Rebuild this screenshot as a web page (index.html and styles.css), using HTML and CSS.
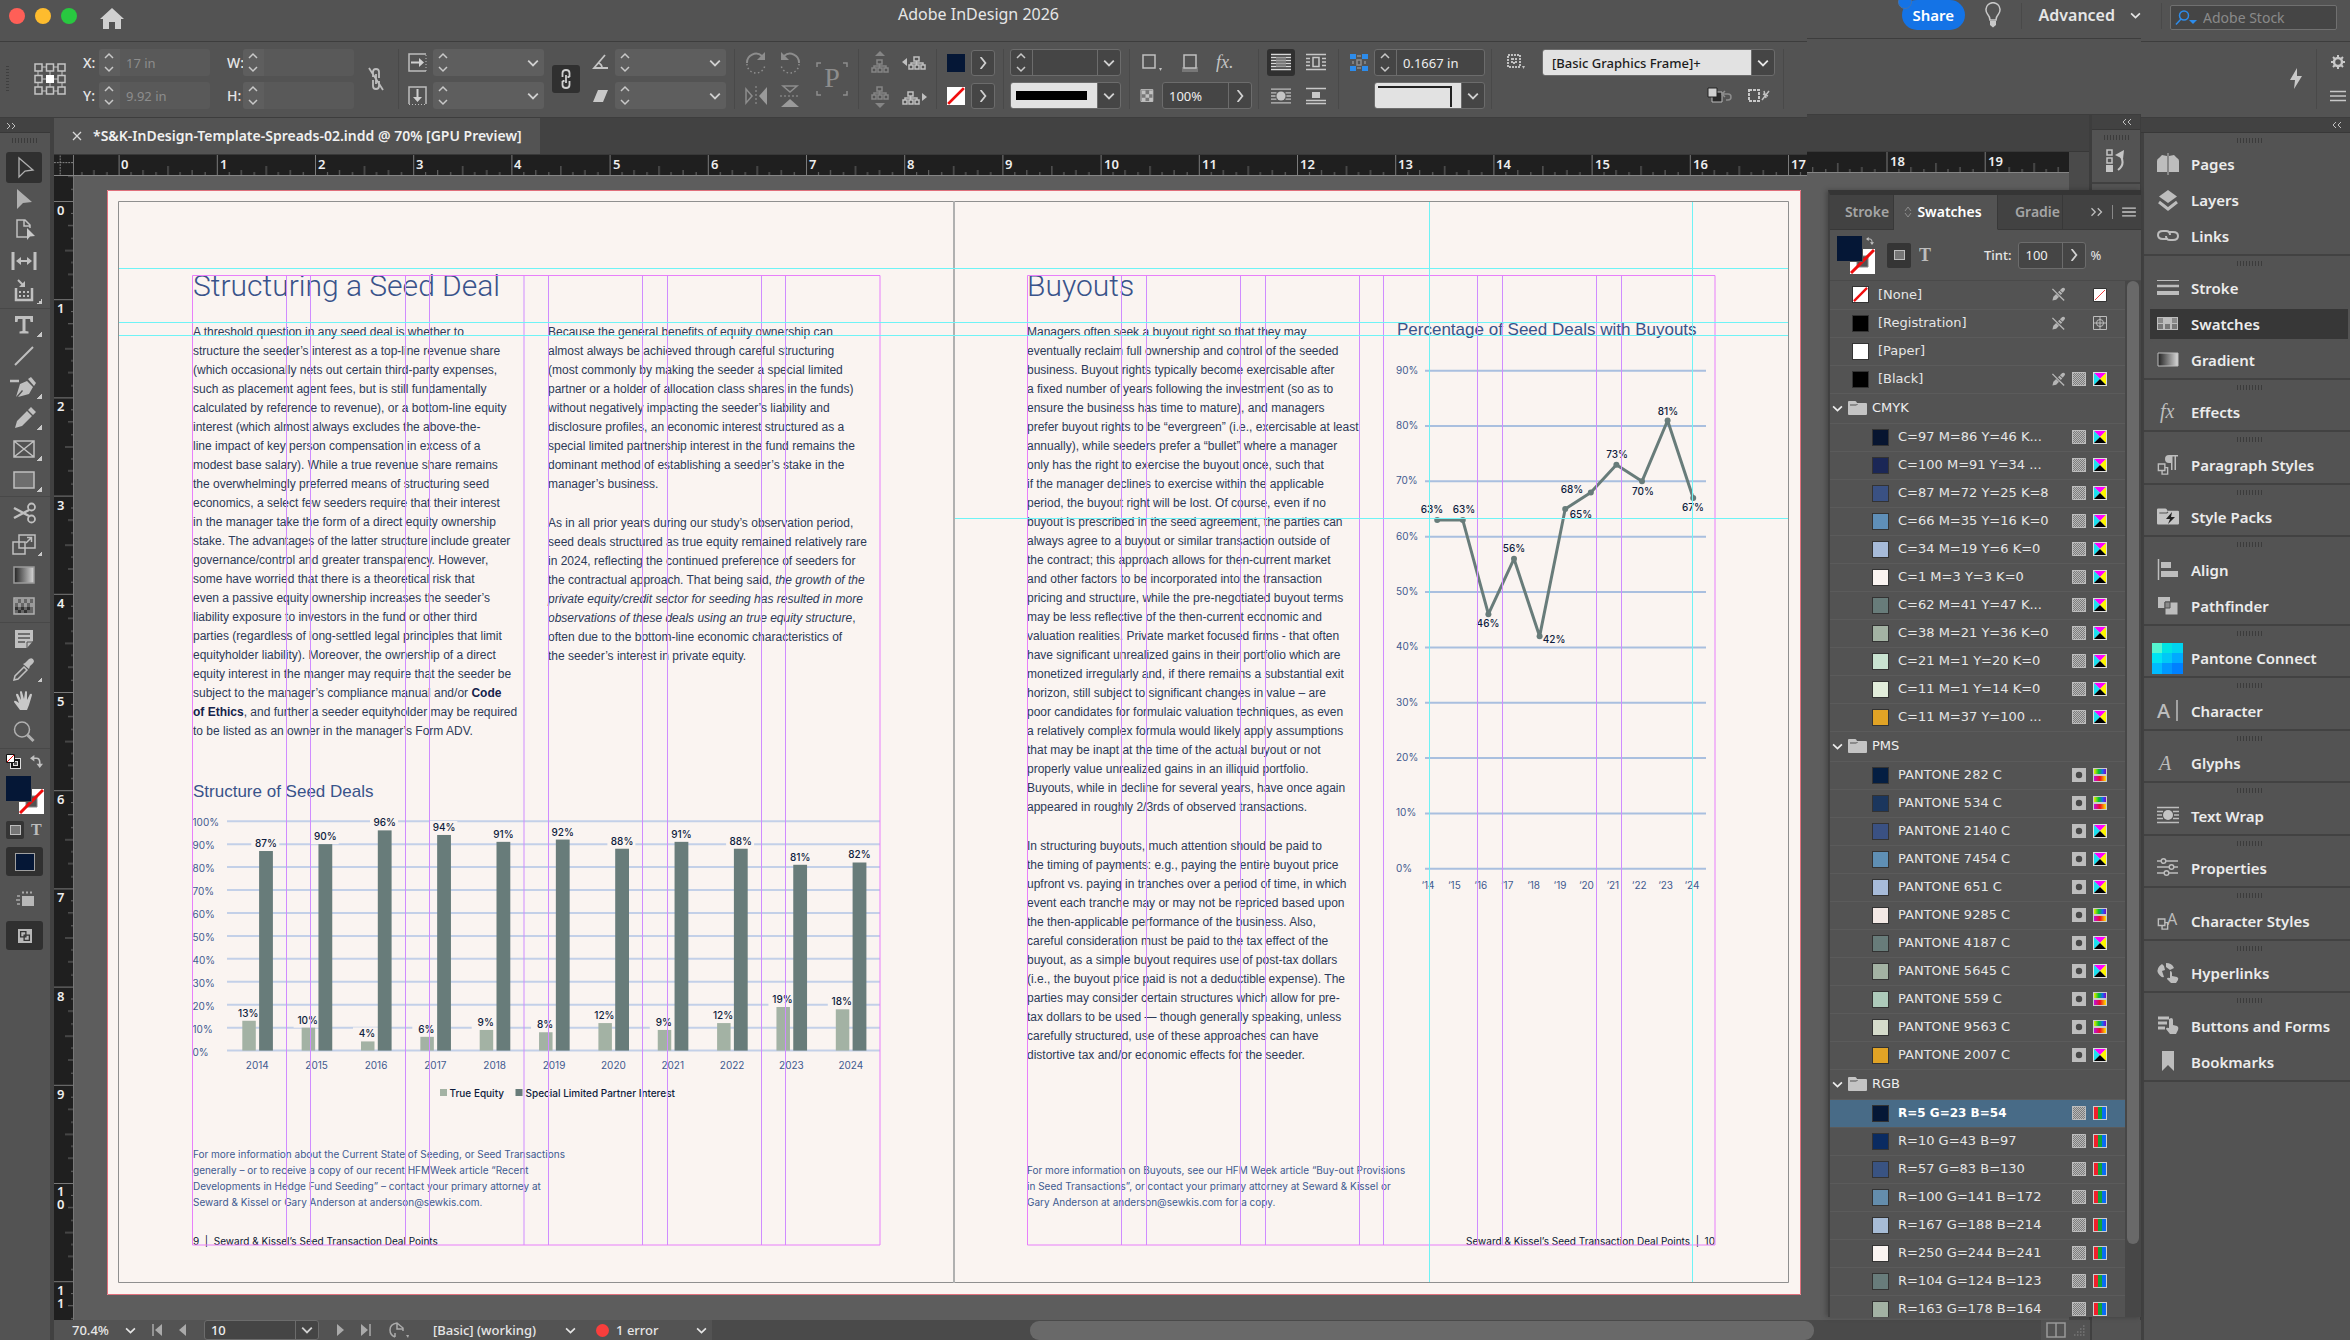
FILE: index.html
```html
<!DOCTYPE html>
<html lang="en">
<head>
<meta charset="utf-8">
<title>Adobe InDesign 2026</title>
<link rel="stylesheet" href="styles.css">
</head>
<body>
<svg class="defs" aria-hidden="true">
  <defs>
    <symbol id="spin" viewBox="0 0 21 27"><path d="M6 9l4-4 4 4M6 18l4 4 4-4" fill="none" stroke="#c8c8c8" stroke-width="1.5"/></symbol>
    <symbol id="down" viewBox="0 0 10 10"><path d="M1 3l4 4 4-4" fill="none" stroke="currentColor" stroke-width="1.5"/></symbol>
    <symbol id="right" viewBox="0 0 10 10"><path d="M3 0l4 5-4 5" fill="none" stroke="currentColor" stroke-width="1.5"/></symbol>
    <symbol id="menu" viewBox="0 0 16 14"><path d="M0 2.500h16M0 7h16M0 11.500h16" stroke="#c8c8c8" stroke-width="1.500"/></symbol>
    <symbol id="dbl-left" viewBox="0 0 10 8"><path d="M4 1L1 4l3 3M9 1L6 4l3 3" fill="none" stroke="#c0c0c0"/></symbol>
    <symbol id="dbl-right" viewBox="0 0 10 8"><path d="M1 1l3 3-3 3M6 1l3 3-3 3" fill="none" stroke="#c0c0c0"/></symbol>
    <symbol id="none" viewBox="0 0 16 16"><path d="M0 0h16v16H0z" fill="#fff"/><path d="M1 15L15 1" stroke="#f00d0d" stroke-width="2.500"/></symbol>
    <symbol id="nonethin" viewBox="0 0 14 14"><path d="M.500.500h13v13H.500z" fill="#fff" stroke="#333"/><path d="M2 12L12 2" stroke="#f04040"/></symbol>
    <symbol id="nopen" viewBox="0 0 16 16"><path d="M1.500 14.500l1-4L9 4l3 3-6.500 6.500zM9.500 3.500L12 1q3-1 3 2l-2.500 3z" fill="#b5b5b5"/><path d="M2 2l12 12" stroke="#535353" stroke-width="3"/><path d="M1.500 2l12.500 12.500" stroke="#b5b5b5" stroke-width="1.500"/></symbol>
    <pattern id="dither" width="2" height="2" patternUnits="userSpaceOnUse"><path d="M0 0h1v1H0zM1 1h1v1H1z" fill="#b9b9b9"/></pattern>
    <symbol id="tint" viewBox="0 0 14 14"><path d="M0 0h14v14H0z" fill="#7d7d7d"/><path d="M0 0h14v14H0z" fill="url(#dither)"/><path d="M.500.500h13v13H.500z" fill="none" stroke="#bdbdbd"/></symbol>
    <symbol id="spot" viewBox="0 0 14 14"><path d="M0 0h14v14H0z" fill="#bdbdbd"/><circle cx="7" cy="7" r="3.200" fill="#484848"/></symbol>
    <symbol id="cmyk" viewBox="0 0 14 14"><path d="M0 0h14v14H0z" fill="#ddd"/><path d="M1 1h12L7 7z" fill="#f0f"/><path d="M1 1v12l6-6z" fill="#19e0f0"/><path d="M13 1v12L7 7z" fill="#fdf500"/><path d="M1 13h12L7 7z" fill="#000"/></symbol>
    <symbol id="rgb" viewBox="0 0 14 14"><path d="M0 0h14v14H0z" fill="#ccc"/><path d="M1 1h4v12H1z" fill="#f0202c"/><path d="M5 1h4v12H5z" fill="#10a53a"/><path d="M9 1h4v12H9z" fill="#0a6cf2"/></symbol>
    <linearGradient id="lab1"><stop offset="0" stop-color="#e6f000"/><stop offset=".4" stop-color="#00c030"/><stop offset=".7" stop-color="#1070f0"/><stop offset="1" stop-color="#8000d0"/></linearGradient>
    <linearGradient id="lab2"><stop offset="0" stop-color="#c010e0"/><stop offset=".5" stop-color="#f00d20"/><stop offset="1" stop-color="#ffe800"/></linearGradient>
    <symbol id="lab" viewBox="0 0 14 14"><path d="M0 0h14v14H0z" fill="#ccc"/><path d="M1 1h12v5H1z" fill="url(#lab1)"/><path d="M1 8h12v5H1z" fill="url(#lab2)"/></symbol>
    <symbol id="folder" viewBox="0 0 19 16"><path d="M0 2q0-1 1-1h6q1 0 1.500 1l.5 1h9q1 0 1 1v10q0 1-1 1H1q-1 0-1-1z" fill="#c4c4c4"/><path d="M2 5h6.500l1-1" fill="none" stroke="#535353"/></symbol>
    <linearGradient id="grad"><stop offset="0" stop-color="#222"/><stop offset="1" stop-color="#d8d8d8"/></linearGradient>
    <symbol id="wrap" viewBox="0 0 22 18"><path d="M0 1.500h22M0 5.500h6M16 5.500h6M0 9h5M17 9h5M0 12.500h6M16 12.500h6M0 16.500h22" stroke="#bdbdbd" stroke-width="1.500"/><circle cx="11" cy="9" r="5" fill="#c4c4c4"/></symbol>
    <symbol id="tree" viewBox="0 0 22 22"><path d="M8 7h5v4H8zM3 15h4v4H3zM9 15h4v4H9zM15 15h4v4h-4z" fill="none" stroke="currentColor" stroke-width="1.500"/><path d="M10.500 11v4M5 15v-2h12v2" fill="none" stroke="currentColor" stroke-width="1.500"/></symbol>
    <symbol id="fillstroke" viewBox="0 0 38 38"><path d="M13 13h25v25H13z" fill="#fff"/><path d="M20 20h11v11H20z" fill="#535353" stroke="#888"/><path d="M14 37L37 14" stroke="#f00d0d" stroke-width="3"/><path d="M0 0h26v26H0z" fill="#535353"/><path d="M0 0h25v25H0z" fill="#051736"/></symbol>
    <symbol id="swap" viewBox="0 0 12 12"><path d="M3 3h3q3 0 3 4v2" fill="none" stroke="#c0c0c0" stroke-width="1.500"/><path d="M0 3l4-3v6zM9 12L6 8h6z" fill="#c0c0c0"/></symbol>
    <symbol id="styleboxes" viewBox="0 0 12 14"><path d="M1 1h7v7H1z" fill="none" stroke="#bdbdbd" stroke-width="1.500"/><path d="M5 8v4h6V5H8" fill="none" stroke="#bdbdbd" stroke-width="1.500"/></symbol>
  </defs>
</svg>

<div class="app">
  <header class="title-bar">
    <span class="light red"></span><span class="light amber"></span><span class="light green"></span>
    <button class="home" aria-label="Home"><svg width="24" height="22" viewBox="0 0 24 22"><path d="M12 0L0 11h3v10h6v-7h6v7h6V11h3z" fill="#d0d0d0"/></svg></button>
    <h1>Adobe InDesign 2026</h1>
  </header>

  <section class="control-bar" aria-label="Control">
    <span class="vgrip"></span>
    <svg class="refpoint" width="32" height="32" viewBox="0 0 32 32"><path d="M4 4h24v24H4zM4 16h24M16 4v24" fill="none" stroke="#c4c4c4"/><g fill="#535353" stroke="#c4c4c4" stroke-width="1.500"><path d="M1 1h7v7H1zM12.500 1h7v7h-7zM24 1h7v7h-7zM1 12.500h7v7H1zM24 12.500h7v7h-7zM1 24h7v7H1zM12.500 24h7v7h-7zM24 24h7v7h-7z"/></g><path d="M12 12h8v8h-8z" fill="#fff"/></svg>
    <div class="pair g17">
      <div class="row"><label for="x">X:</label><div class="field dim"><svg width="21" height="27"><use href="#spin"/></svg><input id="x" value="17 in"></div></div>
      <div class="row"><label for="y">Y:</label><div class="field dim"><svg width="21" height="27"><use href="#spin"/></svg><input id="y" value="9.92 in"></div></div>
    </div>
    <div class="pair g17">
      <div class="row"><label for="w">W:</label><div class="field dim"><svg width="21" height="27"><use href="#spin"/></svg><input id="w"></div></div>
      <div class="row"><label for="h">H:</label><div class="field dim"><svg width="21" height="27"><use href="#spin"/></svg><input id="h"></div></div>
    </div>
    <svg class="g12" width="20" height="28" viewBox="0 0 20 28"><path d="M7 12V7q0-3 3-3t3 3v6M7 15v6q0 3 3 3t3-3v-5M10 9v10M3 3l14 22" fill="none" stroke="#bdbdbd" stroke-width="1.800"/></svg>
    <span class="sep g12"></span>
    <div class="pair g9">
      <div class="row"><svg width="25" height="20" viewBox="0 0 25 20"><path d="M18 1H1v17h17" fill="none" stroke="#bdbdbd" stroke-width="1.500"/><path d="M18 2v16" stroke="#bdbdbd" stroke-dasharray="1 2"/><path d="M3 9.500h9" stroke="#d0d0d0" stroke-width="2"/><path d="M11 5l5 4.500-5 4.500z" fill="#d0d0d0"/></svg><div class="field"><svg width="21" height="27"><use href="#spin"/></svg><input aria-label="Scale X"><button aria-label="Scale X options"><svg width="12" height="12"><use href="#down"/></svg></button></div></div>
      <div class="row"><svg width="25" height="20" viewBox="0 0 25 20"><path d="M1 18V1h17v17" fill="none" stroke="#bdbdbd" stroke-width="1.500"/><path d="M1 18.500h17" stroke="#bdbdbd" stroke-dasharray="1 2"/><path d="M9.500 3v9" stroke="#d0d0d0" stroke-width="2"/><path d="M5 11l4.500 5 4.500-5z" fill="#d0d0d0"/></svg><div class="field"><svg width="21" height="27"><use href="#spin"/></svg><input aria-label="Scale Y"><button aria-label="Scale Y options"><svg width="12" height="12"><use href="#down"/></svg></button></div></div>
    </div>
    <button class="chain g8" aria-label="Constrain proportions"><svg width="12" height="22" viewBox="0 0 12 22"><path d="M2.500 9V5q0-3 3.500-3t3.500 3v4M2.500 13v4q0 3 3.500 3t3.500-3v-4M6 7v8M9.500 9h-2M2.500 13h2" fill="none" stroke="#d0d0d0" stroke-width="1.800"/></svg></button>
    <div class="pair g12">
      <div class="row"><svg width="23" height="18" viewBox="0 0 23 18"><path d="M13 1L2 14h14M6 9q4 1 4 5" fill="none" stroke="#c4c4c4" stroke-width="1.800"/></svg><div class="field"><svg width="21" height="27"><use href="#spin"/></svg><input aria-label="Rotation angle"><button aria-label="Rotation options"><svg width="12" height="12"><use href="#down"/></svg></button></div></div>
      <div class="row"><svg width="23" height="18" viewBox="0 0 23 18"><path d="M6 3h10l-5 12H1z" fill="#c8c8c8"/></svg><div class="field"><svg width="21" height="27"><use href="#spin"/></svg><input aria-label="Shear angle"><button aria-label="Shear options"><svg width="12" height="12"><use href="#down"/></svg></button></div></div>
    </div>
    <span class="sep g8"></span>
    <div class="icons4 g9">
      <svg width="24" height="24" viewBox="0 0 24 24"><path d="M3 12a9 9 0 0 1 15-7" fill="none" stroke="#8d8d8d" stroke-width="2"/><path d="M21 1v8h-8z" fill="#8d8d8d"/><path d="M3 13a9 9 0 0 0 18 0" fill="none" stroke="#8d8d8d" stroke-dasharray="1.500 2.500" stroke-width="1.500"/></svg>
      <svg width="24" height="24" viewBox="0 0 24 24"><path d="M21 12A9 9 0 0 0 6 5" fill="none" stroke="#8d8d8d" stroke-width="2"/><path d="M3 1v8h8z" fill="#8d8d8d"/><path d="M21 13a9 9 0 0 1-18 0" fill="none" stroke="#8d8d8d" stroke-dasharray="1.500 2.500" stroke-width="1.500"/></svg>
      <svg width="24" height="24" viewBox="0 0 24 24"><path d="M2 5v14l6-7z" fill="none" stroke="#8d8d8d" stroke-width="1.500"/><path d="M23 3v18l-8-9z" fill="#9a9a9a"/><path d="M12 2v20" stroke="#9a9a9a" stroke-dasharray="2 2"/></svg>
      <svg width="24" height="24" viewBox="0 0 24 24"><path d="M5 2h14l-7 6z" fill="none" stroke="#8d8d8d" stroke-width="1.500"/><path d="M3 23h18l-9-8z" fill="#9a9a9a"/><path d="M2 12h20" stroke="#9a9a9a" stroke-dasharray="2 2"/></svg>
    </div>
    <svg class="g14" width="32" height="34" viewBox="0 0 32 34"><path d="M1 5V1h4M27 1h4v4M31 29v4h-4M5 33H1v-4" fill="none" stroke="#8d8d8d" stroke-width="1.500"/><text x="16" y="25" class="serif-p">P</text></svg>
    <span class="sep g10"></span>
    <div class="icons4 trees g10">
      <svg class="faint" width="22" height="24" viewBox="0 0 22 24"><path d="M6 5l5-5 5 5z" fill="currentColor"/><use href="#tree" y="2" width="22" height="22"/></svg>
      <svg width="26" height="22" viewBox="0 0 26 22"><path d="M5 6v8l-5-4z" fill="currentColor"/><use href="#tree" x="4" y="-2" width="22" height="22"/></svg>
      <svg class="faint" width="22" height="24" viewBox="0 0 22 24"><path d="M6 19l5 5 5-5z" fill="currentColor"/><use href="#tree" y="-4" width="22" height="22"/></svg>
      <svg width="26" height="22" viewBox="0 0 26 22"><path d="M20 8v8l5-4z" fill="currentColor"/><use href="#tree" x="-2" width="22" height="22"/></svg>
    </div>
    <span class="sep g8"></span>
    <div class="pair g10">
      <div class="row gap6"><span class="chip navy"></span><button class="box-btn" aria-label="Fill colour"><svg width="12" height="12"><use href="#right"/></svg></button></div>
      <div class="row gap6"><svg class="chip" width="18" height="18"><use href="#none"/></svg><button class="box-btn" aria-label="Stroke colour"><svg width="12" height="12"><use href="#right"/></svg></button></div>
    </div>
    <span class="sep g8"></span>
    <div class="pair g6">
      <div class="row"><div class="field dark"><svg width="21" height="27"><use href="#spin"/></svg><input aria-label="Stroke weight"><button aria-label="Stroke weight options"><svg width="12" height="12"><use href="#down"/></svg></button></div></div>
      <div class="row"><div class="field dark"><span class="preview"><i class="line"></i></span><button aria-label="Stroke type"><svg width="12" height="12"><use href="#down"/></svg></button></div></div>
    </div>
    <span class="sep g8"></span>
    <div class="pair g8">
      <div class="row obj">
        <svg width="22" height="20" viewBox="0 0 22 20"><path d="M5 2H2v3M10 2h4v4M14 10v5h-4M2 10v5h3M5 2h5M2 5v5M14 5v5M5 15h5" fill="none" stroke="#c0c0c0" stroke-width="1.500"/><path d="M18 15h3l-1.500 3z" fill="#c0c0c0"/></svg>
        <svg width="18" height="20" viewBox="0 0 18 20"><path d="M1 14h16v5H1z" fill="#777"/><path d="M3 2h12v13H3z" fill="#535353" stroke="#c0c0c0" stroke-width="1.500"/></svg>
        <svg width="22" height="22" viewBox="0 0 22 22"><text x="0" y="16" class="fx">fx.</text></svg>
      </div>
      <div class="row"><svg class="opac" width="24" height="16" viewBox="0 0 24 16"><path d="M1 1h13v13H1z" fill="#777" stroke="#c0c0c0"/><path d="M2 2h4v4H2zM10 2h4v4h-4zM6 6h4v4H6zM2 10h4v4H2zM10 10h4v4h-4z" fill="#c0c0c0"/></svg><div class="field dark opacity"><input aria-label="Opacity" value="100%"><button aria-label="Opacity options"><svg width="12" height="12"><use href="#right"/></svg></button></div></div>
    </div>
    <span class="sep g6"></span>
    <div class="icons4 wraps g8">
      <button class="on" aria-label="No text wrap"><svg width="20" height="18" viewBox="0 0 20 18"><path d="M0 1.500h20M0 4.500h20M0 7.500h20M0 10.500h20M0 13.500h20M0 16.500h20" stroke="#d8d8d8" stroke-width="1.500"/><path d="M5 4h10v10H5z" fill="#888" opacity=".7"/></svg></button>
      <button aria-label="Wrap around bounding box"><svg width="20" height="18" viewBox="0 0 20 18"><path d="M0 1.500h20M0 5.500h4M16 5.500h4M0 9h4M16 9h4M0 12.500h4M16 12.500h4M0 16.500h20" stroke="#c8c8c8" stroke-width="1.500"/><path d="M7 4.500h6v9H7z" fill="none" stroke="#c8c8c8" stroke-width="1.500"/></svg></button>
      <button aria-label="Wrap around object shape"><svg width="20" height="18"><use href="#wrap"/></svg></button>
      <button aria-label="Jump object"><svg width="20" height="18" viewBox="0 0 20 18"><path d="M0 1.500h20M0 13.500h20M0 16.500h20" stroke="#c8c8c8" stroke-width="1.500"/><path d="M6 5h8v6H6z" fill="#c8c8c8"/></svg></button>
    </div>
    <span class="sep g8"></span>
    <div class="pair g10">
      <div class="row"><svg width="25" height="20" viewBox="0 0 25 20"><path d="M1 1h6v5H1zM13 1h6v5h-6zM1 13h6v5H1zM13 13h6v5h-6z" fill="#2d8ceb"/><path d="M8 3h4M8 15h4M4 8v3M16 8v3M8 7h4v5H8z" fill="none" stroke="#8d8d8d" stroke-width="1.500"/></svg><div class="field dark"><svg width="21" height="27"><use href="#spin"/></svg><input aria-label="Corner radius" value="0.1667 in"></div></div>
      <div class="row"><span class="spacer25"></span><div class="field dark"><span class="preview corner"><i></i></span><button aria-label="Corner shape"><svg width="12" height="12"><use href="#down"/></svg></button></div></div>
    </div>
    <span class="sep g6"></span>
    <div class="pair g14">
      <div class="row"><svg class="frameicon" width="36" height="20" viewBox="0 0 36 20"><path d="M2 2h12v12H2zM6 6h4v4H6z" fill="none" stroke="#c0c0c0" stroke-width="2" stroke-dasharray="2 1"/><path d="M16 13h3l-1.500 3z" fill="#c0c0c0"/></svg><div class="field dark style"><select aria-label="Object style"><option>[Basic Graphics Frame]+</option></select><span class="dd"><svg width="12" height="12"><use href="#down"/></svg></span></div></div>
      <div class="row tail"><svg width="26" height="18" viewBox="0 0 26 18"><path d="M5 5h10v10H5z" fill="#2a2a2a" stroke="#bbb"/><path d="M1 1h9v9H1z" fill="#d0d0d0" stroke="#222"/><path d="M16 7h5q3 0 3 3t-3 3h-2M18 4l-3 3 3 3" fill="none" stroke="#8d8d8d" stroke-width="1.500"/></svg><svg width="24" height="18" viewBox="0 0 24 18"><path d="M2 3h10v11H2z" fill="none" stroke="#c8c8c8" stroke-width="2" stroke-dasharray="3 1"/><path d="M15 13l7-9M16 7l5 2M17 4l2 7" stroke="#c0c0c0" stroke-width="1.500"/></svg></div>
    </div>
    <span class="sep g8"></span>
  </section>

  <aside class="toolbar" aria-label="Tools">
    <div class="tool-head"><svg width="10" height="8"><use href="#dbl-right"/></svg></div>
    <span class="grip"></span>
    <div class="tools first">
      <button class="on" aria-label="Selection"><svg viewBox="0 0 36 30"><path d="M13 5l14 12-8 1-6 6z" fill="none" stroke="#b0b0b0" stroke-width="1.300"/></svg></button>
      <button aria-label="Direct selection"><svg viewBox="0 0 36 30"><path d="M11 5l15 13-9 1-6 6z" fill="#b0b0b0"/></svg></button>
      <button aria-label="Page"><svg viewBox="0 0 36 30"><path d="M24 13v-3l-5-5h-8v17h11M18 5v6h6" fill="none" stroke="#c0c0c0" stroke-width="1.500"/><path d="M21 13l8 8-5 .5-3 3.500z" fill="#c8c8c8"/></svg></button>
      <button aria-label="Gap"><svg viewBox="0 0 36 30"><path d="M7 6v18M29 6v18" stroke="#c0c0c0" stroke-width="3"/><path d="M13 15h10" stroke="#c0c0c0" stroke-width="2"/><path d="M10 15l5-4v8zM26 15l-5-4v8z" fill="#c0c0c0"/></svg></button>
      <button class="more" aria-label="Content collector"><svg viewBox="0 0 36 30"><path d="M10 11v12h16V11" fill="none" stroke="#c0c0c0" stroke-width="2.500"/><path d="M13 15h11M13 19h11" stroke="#c0c0c0" stroke-width="2" stroke-dasharray="2 2"/><path d="M12 3l5 5" stroke="#c0c0c0" stroke-width="2"/><path d="M19 10h-6l6-6z" fill="#c0c0c0"/></svg></button>
    </div>
    <div class="tools">
      <button class="more" aria-label="Type"><svg viewBox="0 0 36 30"><path d="M9 6h18v6h-2.500l-.500-3h-4.500v12l3 .5v2h-9v-2l3-.5V9H12l-.500 3H9z" fill="#c0c0c0"/></svg></button>
      <button aria-label="Line"><svg viewBox="0 0 36 30"><path d="M9 24L27 6" stroke="#c0c0c0" stroke-width="2"/></svg></button>
      <button class="more" aria-label="Pen"><svg viewBox="0 0 36 30"><path d="M4 9h9" stroke="#c0c0c0" stroke-width="2.500"/><path d="M10 25l4-13 7-3 6 6-4 7-11 3 5-6-1-1z" fill="#c0c0c0"/><path d="M22 7l3-2 5 6-2 3z" fill="#c0c0c0"/></svg></button>
      <button class="more" aria-label="Pencil"><svg viewBox="0 0 36 30"><path d="M9 25l2-7L21 8l5 5-10 10zM22 7l3-3 5 5-3 3z" fill="#c0c0c0"/></svg></button>
      <button class="more" aria-label="Rectangle frame"><svg viewBox="0 0 36 30"><path d="M8 7h20v16H8zM8 7l20 16M28 7L8 23" fill="none" stroke="#c0c0c0" stroke-width="1.500"/></svg></button>
      <button class="more" aria-label="Rectangle"><svg viewBox="0 0 36 30"><path d="M8 7h20v16H8z" fill="#6e6e6e" stroke="#c0c0c0" stroke-width="1.500"/></svg></button>
    </div>
    <div class="tools">
      <button aria-label="Scissors"><svg viewBox="0 0 36 30"><path d="M8 10l15 8M8 20l15-8" stroke="#c0c0c0" stroke-width="2.500"/><circle cx="25.500" cy="9" r="3.500" fill="none" stroke="#c0c0c0" stroke-width="1.800"/><circle cx="25.500" cy="21" r="3.500" fill="none" stroke="#c0c0c0" stroke-width="1.800"/></svg></button>
      <button class="more" aria-label="Free transform"><svg viewBox="0 0 36 30"><path d="M7 13h12v12H7zM13 6h16v13H13z" fill="none" stroke="#c0c0c0" stroke-width="1.500"/><path d="M20 14l5-5M21 8.500h4.500V13" fill="none" stroke="#c0c0c0" stroke-width="1.500"/></svg></button>
      <button aria-label="Gradient swatch"><svg viewBox="0 0 36 30"><path d="M8 7h20v16H8z" fill="url(#grad)" stroke="#9a9a9a" stroke-width="1.500"/></svg></button>
      <button aria-label="Gradient feather"><svg viewBox="0 0 36 30"><path d="M8 7h20v16H8z" fill="#666" stroke="#b0b0b0" stroke-width="1.500"/><path d="M9 8h3v4H9zM15 8h3v4h-3zM21 8h3v4h-3zM12 12h3v4h-3zM18 12h3v4h-3zM24 12h3v4h-3z" fill="#9a9a9a"/><path d="M9 16h3v3H9zM15 16h3v3h-3zM21 16h3v3h-3zM12 19h3v3h-3zM18 19h3v3h-3z" fill="#333"/></svg></button>
    </div>
    <div class="tools">
      <button aria-label="Note"><svg viewBox="0 0 36 30"><path d="M9 6h18v11l-6 7H9z" fill="#c0c0c0"/><path d="M12 10h12M12 14h12M12 18h7" stroke="#535353" stroke-width="1.500"/><path d="M21 24v-6h6" fill="none" stroke="#535353"/></svg></button>
      <button class="more" aria-label="Eyedropper"><svg viewBox="0 0 36 30"><path d="M8 25l1-4 9-9 3 3-9 9z" fill="none" stroke="#c0c0c0" stroke-width="1.500"/><path d="M17 9l2-1 4-4q4-2 5 2 0 2-4 5l-1 3z" fill="#c0c0c0"/></svg></button>
      <button aria-label="Hand"><svg viewBox="0 0 36 30"><path d="M14 24q-3-4-6-8 0-2 2-1l3 2-3-8q0-2 2-1l3 6-1-8q1-2 2 0l2 7 1-7q1-2 2 0l0 8 3-6q2-1 2 1l-3 10-2 5z" fill="#c8c8c8"/></svg></button>
      <button aria-label="Zoom"><svg viewBox="0 0 36 30"><circle cx="16" cy="12.500" r="7.500" fill="none" stroke="#b0b0b0" stroke-width="1.500"/><path d="M21.500 18l6 6" stroke="#b0b0b0" stroke-width="3"/></svg></button>
    </div>
    <div class="colour-tools">
      <div class="cline"><svg width="15" height="15" viewBox="0 0 15 15"><path d="M6 6h7v7H6z" fill="none" stroke="#ddd" stroke-width="4"/><path d="M6 6h7v7H6z" fill="none" stroke="#111" stroke-width="2"/><path d="M.500.500h8v8h-8z" fill="#fff" stroke="#111"/><path d="M1 8l7-7" stroke="#f00d0d"/></svg><svg width="13" height="15"><use href="#swap"/></svg></div>
      <svg class="fs" width="38" height="38"><use href="#fillstroke"/></svg>
      <div class="cline fmt"><span class="fmt-on"><i></i></span><svg width="13" height="18"><text x="1" y="14" class="serif-t">T</text></svg></div>
      <button class="mode on" aria-label="Apply colour"><i class="navybox"></i></button>
      <button class="mode" aria-label="View options"><svg width="18" height="16" viewBox="0 0 18 16"><path d="M6 5h12v10H6z" fill="#b8b8b8"/><path d="M6 1.500h12" stroke="#aaa" stroke-width="2" stroke-dasharray="2 2"/><path d="M1 5h3M0 9h4M1 13h3" stroke="#aaa" stroke-width="1.500"/></svg></button>
      <button class="mode on" aria-label="Screen mode"><svg width="14" height="14" viewBox="0 0 16 16"><path d="M0 0h16v16H0z" fill="#b8b8b8"/><path d="M3 3h6v6H3zM7 7h6v6H7z" fill="#b8b8b8" stroke="#333" stroke-width="1.500"/></svg></button>
    </div>
  </aside>

  <main class="document">
    <div class="tabs"><button class="tab"><svg width="10" height="10" viewBox="0 0 10 10"><path d="M1 1l8 8M9 1L1 9" stroke="#d8d8d8" stroke-width="1.300"/></svg>*S&amp;K-InDesign-Template-Spreads-02.indd @ 70% [GPU Preview]</button></div>
    <div class="ruler-row">
      <svg class="corner" width="20" height="20" viewBox="0 0 20 20"><path d="M0 7.500h20M6.500 0v20" stroke="#8d8d8d" stroke-dasharray="2 1"/></svg>
      <svg class="hruler" aria-label="Horizontal ruler">
        <defs><pattern id="ht" x="44.600" width="98.200" height="20" patternUnits="userSpaceOnUse"><path d="M.500 0v20" stroke="#7a7a7a"/><path d="M12.500 17v3M24.500 15v5M37.500 17v3M49.500 11v9M61.500 17v3M73.500 15v5M86.500 17v3" stroke="#6c6c6c"/></pattern></defs>
        <rect width="100%" height="20" fill="url(#ht)"/>
        <g><text x="47" y="14">0</text><text x="146" y="14">1</text><text x="244" y="14">2</text><text x="342" y="14">3</text><text x="440" y="14">4</text><text x="539" y="14">5</text><text x="637" y="14">6</text><text x="735" y="14">7</text><text x="833" y="14">8</text><text x="931" y="14">9</text><text x="1030" y="14">10</text><text x="1128" y="14">11</text><text x="1226" y="14">12</text><text x="1324" y="14">13</text><text x="1422" y="14">14</text><text x="1521" y="14">15</text><text x="1619" y="14">16</text><text x="1717" y="14">17</text></g>
      </svg>
    </div>
    <div class="canvas-row">
      <svg class="vruler" width="20" aria-label="Vertical ruler">
        <defs><pattern id="vt" y="25" width="20" height="98.200" patternUnits="userSpaceOnUse"><path d="M0 .500h20" stroke="#7a7a7a"/><path d="M17 12.500h3M14 24.500h6M17 37.500h3M11 49.500h9M17 61.500h3M14 73.500h6M17 86.500h3" stroke="#6c6c6c"/></pattern></defs>
        <rect width="20" height="100%" fill="url(#vt)"/>
        <g><text x="3" y="39">0</text><text x="3" y="137">1</text><text x="3" y="235">2</text><text x="3" y="334">3</text><text x="3" y="432">4</text><text x="3" y="530">5</text><text x="3" y="628">6</text><text x="3" y="726">7</text><text x="3" y="825">8</text><text x="3" y="923">9</text><text x="3" y="1020">1</text><text x="3" y="1033">0</text><text x="3" y="1119">1</text><text x="3" y="1132">1</text></g>
      </svg>
      <div class="canvas">
        <article class="spread">
          <h2 class="frame h-left">Structuring a Seed Deal</h2>
          <div class="frame body b1"><p>A threshold question in any seed deal is whether to<br>structure the seeder’s interest as a top-line revenue share<br>(which occasionally nets out certain third-party expenses,<br>such as placement agent fees, but is still fundamentally<br>calculated by reference to revenue), or a bottom-line equity<br>interest (which almost always excludes the above-the-<br>line impact of key person compensation in excess of a<br>modest base salary). While a true revenue share remains<br>the overwhelmingly preferred means of structuring seed<br>economics, a select few seeders require that their interest<br>in the manager take the form of a direct equity ownership<br>stake. The advantages of the latter structure include greater<br>governance/control and greater transparency. However,<br>some have worried that there is a theoretical risk that<br>even a passive equity ownership increases the seeder’s<br>liability exposure to investors in the fund or other third<br>parties (regardless of long-settled legal principles that limit<br>equityholder liability). Moreover, the ownership of a direct<br>equity interest in the manger may require that the seeder be<br>subject to the manager’s compliance manual and/or <b>Code<br>of Ethics</b>, and further a seeder equityholder may be required<br>to be listed as an owner in the manager’s Form ADV.</p></div>
          <div class="frame body b2"><p>Because the general benefits of equity ownership can<br>almost always be achieved through careful structuring<br>(most commonly by making the seeder a special limited<br>partner or a holder of allocation class shares in the funds)<br>without negatively impacting the seeder’s liability and<br>disclosure profiles, an economic interest structured as a<br>special limited partnership interest in the fund remains the<br>dominant method of establishing a seeder’s stake in the<br>manager’s business.</p><p>As in all prior years during our study’s observation period,<br>seed deals structured as true equity remained relatively rare<br>in 2024, reflecting the continued preference of seeders for<br>the contractual approach. That being said, <i>the growth of the<br>private equity/credit sector for seeding has resulted in more<br>observations of these deals using an true equity structure</i>,<br>often due to the bottom-line economic characteristics of<br>the seeder’s interest in private equity.</p></div>
          <h3 class="frame c-left">Structure of Seed Deals</h3>
          <p class="frame info i-left">For more information about the Current State of Seeding, or Seed Transactions<br>generally – or to receive a copy of our recent HFMWeek article “Recent<br>Developments in Hedge Fund Seeding” – contact your primary attorney at<br>Seward &amp; Kissel or Gary Anderson at anderson@sewkis.com.</p>
          <p class="frame folio f-left">9&nbsp; |&nbsp; Seward &amp; Kissel’s Seed Transaction Deal Points</p>

          <h2 class="frame h-right">Buyouts</h2>
          <div class="frame body b3"><p>Managers often seek a buyout right so that they may<br>eventually reclaim full ownership and control of the seeded<br>business. Buyout rights typically become exercisable after<br>a fixed number of years following the investment (so as to<br>ensure the business has time to mature), and managers<br>prefer buyout rights to be “evergreen” (i.e., exercisable at least<br>annually), while seeders prefer a “bullet” where a manager<br>only has the right to exercise the buyout once, such that<br>if the manager declines to exercise within the applicable<br>period, the buyout right will be lost. Of course, even if no<br>buyout is prescribed in the seed agreement, the parties can<br>always agree to a buyout or similar transaction outside of<br>the contract; this approach allows for then-current market<br>and other factors to be incorporated into the transaction<br>pricing and structure, while the pre-negotiated buyout terms<br>may be less reflective of the then-current economic and<br>valuation realities. Private market focused firms - that often<br>have significant unrealized gains in their portfolio which are<br>monetized irregularly and, if there remains a substantial exit<br>horizon, still subject to significant changes in value – are<br>poor candidates for formulaic valuation techniques, as even<br>a relatively complex formula would likely apply assumptions<br>that may be inapt at the time of the actual buyout or not<br>properly value unrealized gains in an illiquid portfolio.<br>Buyouts, while in decline for several years, have once again<br>appeared in roughly 2/3rds of observed transactions.</p><p>In structuring buyouts, much attention should be paid to<br>the timing of payments: e.g., paying the entire buyout price<br>upfront vs. paying in tranches over a period of time, in which<br>event each tranche may or may not be repriced based upon<br>the then-applicable performance of the business. Also,<br>careful consideration must be paid to the tax effect of the<br>buyout, as a simple buyout requires use of post-tax dollars<br>(i.e., the buyout price paid is not a deductible expense). The<br>parties may consider certain structures which allow for pre-<br>tax dollars to be used — though generally speaking, unless<br>carefully structured, use of these approaches can have<br>distortive tax and/or economic effects for the seeder.</p></div>
          <h3 class="frame c-right">Percentage of Seed Deals with Buyouts</h3>
          <p class="frame info i-right">For more information on Buyouts, see our HFM Week article “Buy-out Provisions<br>in Seed Transactions”, or contact your primary attorney at Seward &amp; Kissel or<br>Gary Anderson at anderson@sewkis.com for a copy.</p>
          <p class="frame folio f-right">Seward &amp; Kissel’s Seed Transaction Deal Points&nbsp; |&nbsp; 10</p>

          <svg class="art" viewBox="107 190 1694 1105">
            <g class="chart" id="bars"></g>
            <g class="chart" id="line"></g>
            <g fill="none">
              <path d="M107.500 190.500h1693v1104h-1693z" stroke="#e0707c"/>
              <path d="M118.500 201.500h1670v1081h-1670z" stroke="#8f8f8f"/>
              <path d="M954 201v1082" stroke="#b0b0b0" stroke-width="2"/>
              <path d="M286.500 276v969M310.500 276v969M405.500 276v969M429.500 276v969M524 276v969M548.500 276v969M642.500 276v969M667.500 276v969M761.500 276v969M785.500 276v969M1121.500 276v969M1146.500 276v969M1240.500 276v969M1265.500 276v969M1359.500 276v969M1383.500 276v969M1477.500 276v969M1502.500 276v969M1596.500 276v969M1621.500 276v969" stroke="#cf8cff"/>
              <path d="M192.500 275.500h687.500v969.500h-687.500zM1027.500 275.500h687.500v969.500h-687.500z" stroke="#e87ffa"/>
              <path d="M119 268.500h1669M119 322.500h1669M119 335.500h1669M955 518.500h833M1429.500 202v1080M1692.500 202v1080" stroke="#6ff3f6"/>
            </g>
          </svg>
        </article>
      </div>
    </div>
  </main>

  <section class="mid">
    <div class="title-bar mid-title">
      <button class="share"><span class="dot"></span>Share</button>
      <button class="bulb" aria-label="What's new"><svg width="18" height="26" viewBox="0 0 18 26"><path d="M6 18q0-3-2.500-6a7 7 0 1 1 11 0Q12 15 12 18z" fill="none" stroke="#c8c8c8" stroke-width="1.500"/><path d="M6 19h6v4l-3 2.500L6 23z" fill="#c8c8c8"/></svg></button>
      <span class="sep tall"></span>
      <button class="workspace">Advanced <svg width="11" height="11"><use href="#down"/></svg></button>
    </div>
    <div class="control-bar mid-control"></div>
    <div class="mid-row">
      <div class="mid-doc">
        <div class="tabs"></div>
        <div class="ruler-row">
          <svg class="hruler">
            <defs><pattern id="ht2" x="79.500" width="98.200" height="20" patternUnits="userSpaceOnUse"><path d="M.500 0v20" stroke="#7a7a7a"/><path d="M12.500 17v3M24.500 15v5M37.500 17v3M49.500 11v9M61.500 17v3M73.500 15v5M86.500 17v3" stroke="#6c6c6c"/></pattern></defs>
            <rect width="100%" height="20" fill="url(#ht2)"/>
            <g><text x="83" y="14">18</text><text x="181" y="14">19</text></g>
          </svg>
          <span class="vtrack"></span>
        </div>
        <div class="canvas-row"><div class="canvas"></div><span class="vtrack"></span></div>
      </div>
      <div class="mini">
        <div class="dock-head"><svg width="10" height="8"><use href="#dbl-left"/></svg></div>
        <div class="mini-body"><span class="grip"></span><button aria-label="History"><svg width="20" height="24" viewBox="0 0 20 24"><path d="M1 1h5v5H1zM1 9h5v5H1z" fill="none" stroke="#c4c4c4" stroke-width="1.500"/><path d="M0 16h7v7H0z" fill="#c4c4c4"/><path d="M12 21q8-6 2-15" fill="none" stroke="#c4c4c4" stroke-width="2"/><path d="M9 6l9-5-1 9z" fill="#c4c4c4"/></svg></button></div>
      </div>
    </div>

    <section class="panel" aria-label="Swatches">
      <div class="ptabs"><button class="p1">Stroke</button><button class="p2"><svg width="8" height="12" viewBox="0 0 8 12"><path d="M1 5l3-4 3 4M1 7l3 4 3-4" fill="none" stroke="#8d8d8d"/></svg>Swatches</button><button class="p3">Gradie</button><span class="ptail"><svg width="13" height="10"><use href="#dbl-right"/></svg><i></i><svg width="14" height="12"><use href="#menu"/></svg></span></div>
      <div class="ptools">
        <svg width="38" height="38"><use href="#fillstroke"/><use href="#swap" x="29" y="1" width="8" height="8"/></svg>
        <span class="pfmt"><i></i></span><svg class="pt" width="14" height="20"><text x="0" y="16" class="serif-t big">T</text></svg>
        <label for="tint">Tint:</label><div class="field dark tintf"><input id="tint" value="100"><button aria-label="Tint slider"><svg width="12" height="12"><use href="#right"/></svg></button></div><span>%</span>
      </div>
      <div class="plist">
        <table>
          <tbody id="swatches"></tbody>
        </table>
        <span class="pscroll"><i></i></span>
      </div>
    </section>
  </section>

  <aside class="dock" aria-label="Panels">
    <div class="title-bar dock-title"><span class="sep tall"></span><label class="search"><svg width="22" height="16" viewBox="0 0 22 16"><circle cx="9" cy="5.500" r="4.500" fill="none" stroke="#2d8ceb" stroke-width="1.500"/><path d="M6 9l-5 5.500" stroke="#2d8ceb" stroke-width="1.500"/><path d="M14 10h8l-4 4z" fill="#2d8ceb"/></svg><input placeholder="Adobe Stock" aria-label="Search Adobe Stock"></label></div>
    <div class="control-bar dock-control"><svg width="14" height="22" viewBox="0 0 14 22"><path d="M8 0L1 12h5l-1 9L13 8H8z" fill="#c8c8c8"/></svg><span class="sep"></span><span class="stack"><svg width="14" height="14" viewBox="0 0 14 14"><circle cx="7" cy="7" r="4" fill="none" stroke="#c8c8c8" stroke-width="2.500"/><path d="M7 0v2.500M7 11.500V14M0 7h2.500M11.500 7H14M2 2l2 2M10 10l2 2M12 2l-2 2M4 10l-2 2" stroke="#c8c8c8" stroke-width="2"/></svg><svg width="16" height="14"><use href="#menu"/></svg></span></div>
    <div class="dock-head"><svg width="10" height="8"><use href="#dbl-left"/></svg></div>
    <nav class="dock-body">
      <div class="group"><span class="grip"></span>
        <button><svg viewBox="0 0 22 22"><path d="M10 3v16H0V8q0-2 2-3l3-3zM12 3v16h10V8q0-2-2-3l-3-3z" fill="#bdbdbd"/><path d="M11 0v22" stroke="#bdbdbd"/></svg>Pages</button>
        <button><svg viewBox="0 0 22 22"><path d="M11 1l9 6.500-9 6.500-9-6.500z" fill="#bdbdbd"/><path d="M2 13l9 7 9-7" fill="none" stroke="#bdbdbd" stroke-width="3"/></svg>Layers</button>
        <button><svg viewBox="0 0 22 22"><path d="M11 14H6q-5 0-5-4t5-4h3q4 0 4 4M11 7h5q5 0 5 4t-5 4h-3q-4 0-4-4" fill="none" stroke="#bdbdbd" stroke-width="2"/></svg>Links</button></div>
      <div class="group"><span class="grip"></span>
        <button><svg viewBox="0 0 22 22"><path d="M0 3.500h22" stroke="#bdbdbd"/><path d="M0 9h22" stroke="#bdbdbd" stroke-width="2.500"/><path d="M0 16h22" stroke="#bdbdbd" stroke-width="4"/></svg>Stroke</button>
        <button class="on"><svg viewBox="0 0 22 22"><path d="M0 4h21v13H0z" fill="#bdbdbd"/><path d="M1 5h5v5H1zM15 5h5v5h-5z" fill="#8a8a8a"/><path d="M1 11h5v5H1zM8 11h5v5H8zM15 11h5v5h-5z" fill="#777"/></svg>Swatches</button>
        <button><svg viewBox="0 0 22 22"><path d="M1 4h20v13H1z" fill="url(#grad)" stroke="#bdbdbd"/></svg>Gradient</button></div>
      <div class="group"><span class="grip"></span><button><svg viewBox="0 0 22 22"><text x="3" y="17" class="fx lg">fx</text></svg>Effects</button></div>
      <div class="group"><span class="grip"></span><button><svg viewBox="0 0 22 22"><use href="#styleboxes" y="9" width="12" height="13"/><path d="M21 1h-9q-4 0-4 4t4 4h2v7h1.500V2.500h2V16H19V2.500h2z" fill="#bdbdbd"/></svg>Paragraph Styles</button></div>
      <div class="group"><span class="grip"></span><button><svg viewBox="0 0 22 22"><use href="#folder" y="1" width="22" height="19"/><path d="M15 6l-6 7h4l-2 5 7-7h-4z" fill="#222"/></svg>Style Packs</button></div>
      <div class="group"><span class="grip"></span>
        <button><svg viewBox="0 0 22 22"><path d="M1.500 0v21" stroke="#bdbdbd" stroke-width="1.500"/><path d="M4 3h10v6H4zM4 12h17v6H4z" fill="#bdbdbd"/></svg>Align</button>
        <button><svg viewBox="0 0 22 22"><path d="M1 2h12v11H1z" fill="#bdbdbd"/><path d="M8 7h13v13H8z" fill="#bdbdbd" stroke="#535353"/><path d="M8 7h5v6H8z" fill="#8a8a8a" stroke="#535353"/></svg>Pathfinder</button></div>
      <div class="group"><span class="grip"></span><button class="pantone"><svg viewBox="0 0 31 31"><path d="M0 0h11v11H0z" fill="#55f5d0"/><path d="M10 0h11v11H10z" fill="#00e4e4"/><path d="M20 0h11v11H20z" fill="#00d4f0"/><path d="M0 10h11v11H0z" fill="#00e4f2"/><path d="M10 10h11v11H10z" fill="#00c8f6"/><path d="M20 10h11v11H20z" fill="#00aaff"/><path d="M0 20h11v11H0z" fill="#00bcff"/><path d="M10 20h11v11H10z" fill="#0098ff"/><path d="M20 20h11v11H20z" fill="#0080ff"/></svg>Pantone Connect</button></div>
      <div class="group"><span class="grip"></span><button><svg viewBox="0 0 22 22"><text x="0" y="18" class="ic-a">A</text><path d="M20 0v21" stroke="#bdbdbd" stroke-width="1.500"/></svg>Character</button></div>
      <div class="group"><span class="grip"></span><button><svg viewBox="0 0 22 22"><text x="2" y="18" class="ic-g">A</text></svg>Glyphs</button></div>
      <div class="group"><span class="grip"></span><button><svg viewBox="0 0 22 22"><use href="#wrap" y="1" width="22" height="18"/></svg>Text Wrap</button></div>
      <div class="group"><span class="grip"></span><button><svg viewBox="0 0 22 22"><path d="M0 4h4M9 4h12M0 10h12M17 10h4M0 16h7M12 16h9" stroke="#bdbdbd" stroke-width="1.500"/><g fill="none" stroke="#bdbdbd" stroke-width="1.500"><circle cx="6.500" cy="4" r="2.300"/><circle cx="14.500" cy="10" r="2.300"/><circle cx="9.500" cy="16" r="2.300"/></g></svg>Properties</button></div>
      <div class="group"><span class="grip"></span><button><svg viewBox="0 0 22 22"><use href="#styleboxes" y="8" width="12" height="13"/><text x="10" y="15" class="ic-b">A</text></svg>Character Styles</button></div>
      <div class="group"><span class="grip"></span><button><svg viewBox="0 0 22 22"><path d="M5 2q-6 4-4 9 3 5 6 4l-2-6 3-1-1-4zM9 1q6 0 8 5l-4 2-4-3z" fill="#bdbdbd"/><path d="M13 9q2 0 2 2v3l5 1q2 1 1 3l-2 3h-5l-4-4q0-2 3-1v-6z" fill="#bdbdbd"/></svg>Hyperlinks</button></div>
      <div class="group"><span class="grip"></span>
        <button><svg viewBox="0 0 22 22"><path d="M1 3h11M1 8h9M1 13h7" stroke="#bdbdbd" stroke-width="3"/><path d="M14 3q2 0 2 2v5l4 1q2 1 1 4l-2 4h-6l-4-5q0-2 3-1V4z" fill="#bdbdbd"/></svg>Buttons and Forms</button>
        <button><svg viewBox="0 0 22 22"><path d="M5 0h12v20l-6-6-6 6z" fill="#bdbdbd"/></svg>Bookmarks</button></div>
    </nav>
  </aside>

  <footer class="status">
    <div class="st-left">
      <button class="zoomv">70.4% <svg width="11" height="11"><use href="#down"/></svg></button>
      <button aria-label="First page"><svg width="10" height="12" viewBox="0 0 10 12"><path d="M1 0v12" stroke="#aaa" stroke-width="1.500"/><path d="M10 0v12L3 6z" fill="#aaa"/></svg></button>
      <button class="g17" aria-label="Previous page"><svg width="8" height="12" viewBox="0 0 8 12"><path d="M7 0v12L0 6z" fill="#aaa"/></svg></button>
      <div class="field dark pagef g17"><input aria-label="Page" value="10"><button aria-label="Page list"><svg width="12" height="12"><use href="#down"/></svg></button></div>
      <button class="g17" aria-label="Next page"><svg width="8" height="12" viewBox="0 0 8 12"><path d="M1 0v12l7-6z" fill="#aaa"/></svg></button>
      <button class="g17" aria-label="Last page"><svg width="10" height="12" viewBox="0 0 10 12"><path d="M9 0v12" stroke="#aaa" stroke-width="1.500"/><path d="M0 0v12l7-6z" fill="#aaa"/></svg></button>
      <svg class="st-doc" width="22" height="16" viewBox="0 0 22 16"><path d="M7 15q-5-2-5-7 0-6 7-7l6 5v3M9 1v6h6M7 15v-4" fill="none" stroke="#aaa" stroke-width="1.500"/><path d="M18 13h3l-1 3z" fill="#aaa"/></svg>
      <button class="profile"><span>[Basic] (working)</span><svg width="11" height="11"><use href="#down"/></svg></button>
      <button class="errors"><i></i><span>1 error</span><svg width="11" height="11"><use href="#down"/></svg></button>
    </div>
    <div class="hscroll"><i></i></div>
    <div class="st-end"><svg width="20" height="16" viewBox="0 0 20 16"><path d="M1 1h18v14H1zM10 1v14" fill="none" stroke="#999" stroke-width="1.500"/></svg><svg width="12" height="12" viewBox="0 0 12 12"><path d="M9 2h2M6 5h5M3 8h8M0 11h11" stroke="#777" stroke-width="1.500" stroke-dasharray="1.500 1.500"/></svg></div>
    <div class="st-mini"></div>
  </footer>
</div>
<script src="app.js"></script>
</body>
</html>
```
FILE: app.js
```js
// Seed-deal structure by year: [true equity %, special limited partner interest %]
const deals = [[13,87],[10,90],[4,96],[6,94],[9,91],[8,92],[12,88],[9,91],[12,88],[19,81],[18,82]];
let s = '';
const base = 1050.6, unit = 2.294;
for (let p = 0; p <= 100; p += 10) {
  const y = base - p * unit;
  s += `<path class="grid-l" d="M227 ${y}H880"/><text class="axis" x="192.500" y="${y + 5}">${p}%</text>`;
}
deals.forEach(([a, b], i) => {
  const x = 242.3 + i * 59.35, ya = base - a * unit, yb = base - b * unit;
  s += `<rect class="halo" x="${x - 8}" y="${ya - 14}" width="28" height="14"/><rect class="halo" x="${x + 9}" y="${yb - 14}" width="28" height="14"/>`;
  s += `<rect class="eq" x="${x}" y="${ya}" width="13.500" height="${a * unit}"/><rect class="lp" x="${x + 16.8}" y="${yb}" width="13.800" height="${b * unit}"/>`;
  s += `<text class="val mid-t" x="${x + 6}" y="${ya - 4}">${a}%</text><text class="val mid-t" x="${x + 23.7}" y="${yb - 4}">${b}%</text>`;
  s += `<text class="axis mid-t" x="${x + 15}" y="1069">${2014 + i}</text>`;
});
s += '<rect class="eq" x="440" y="1089" width="7" height="7"/><text class="val" x="449.500" y="1097">True Equity</text>';
s += '<rect class="lp" x="515.500" y="1089" width="7" height="7"/><text class="val" x="525.500" y="1097">Special Limited Partner Interest</text>';
document.getElementById('bars').innerHTML = s;

// Buyout share by year: [value, label x, label y]
const buyouts = [[63,1432,513],[63,1464,513],[46,1488,627],[56,1514,552],[42,1554,643],[65,1581,518],[68,1572,493],[73,1617,458],[70,1643,495],[81,1668,415],[67,1693,511]];
const y0 = 868.8, u = 5.535, px = i => 1437.2 + i * 25.6, py = v => y0 - v * u;
s = '';
for (let p = 0; p <= 90; p += 10) s += `<path class="grid-r" d="M1425 ${py(p)}H1706"/><text class="axis" x="1396" y="${py(p) + 3}">${p}%</text>`;
s += `<polyline class="trend" points="${buyouts.map((b, i) => px(i) + ',' + py(b[0])).join(' ')}"/>`;
buyouts.forEach(([v, x, y], i) => {
  s += `<circle class="pt" cx="${px(i)}" cy="${py(v)}" r="3"/><text class="val mid-t" x="${x}" y="${y}">${v}%</text>`;
  s += `<text class="axis mid-t" x="${1428 + i * 26.4}" y="889">‘${14 + i}</text>`;
});
document.getElementById('line').innerHTML = s;

// Swatch list: name, colour, kind, mode; an entry with only a name opens a group
const rows = [
  ['[None]', 'none', '', 'nonethin', 1], ['[Registration]', '#000', '', 'reg', 1], ['[Paper]', '#fff', '', ''], ['[Black]', '#000', 'tint', 'cmyk', 1],
  ['CMYK'],
  ['C=97 M=86 Y=46 K...', '#071530'], ['C=100 M=91 Y=34 ...', '#1b2756'], ['C=87 M=72 Y=25 K=8', '#3a5183'], ['C=66 M=35 Y=16 K=0', '#5f8fb8'], ['C=34 M=19 Y=6 K=0', '#a7bbd9'], ['C=1 M=3 Y=3 K=0', '#faf4f1'], ['C=62 M=41 Y=47 K...', '#687c7a'], ['C=38 M=21 Y=36 K=0', '#a3b2a3'], ['C=21 M=1 Y=20 K=0', '#c9e3d1'], ['C=11 M=1 Y=14 K=0', '#e2eddb'], ['C=11 M=37 Y=100 ...', '#e1a325'],
  ['PMS'],
  ['PANTONE 282 C', '#041e42', 'spot', 'lab'], ['PANTONE 534 C', '#1b365d', 'spot', 'lab'], ['PANTONE 2140 C', '#3a5183', 'spot', 'cmyk'], ['PANTONE 7454 C', '#5f8fb4', 'spot', 'cmyk'], ['PANTONE 651 C', '#a7bbd9', 'spot', 'cmyk'], ['PANTONE 9285 C', '#f3e9e5', 'spot', 'lab'], ['PANTONE 4187 C', '#687c7a', 'spot', 'cmyk'], ['PANTONE 5645 C', '#a3b2a3', 'spot', 'cmyk'], ['PANTONE 559 C', '#adcaba', 'spot', 'lab'], ['PANTONE 9563 C', '#d5dbcb', 'spot', 'lab'], ['PANTONE 2007 C', '#e1a325', 'spot', 'cmyk'],
  ['RGB'],
  ['R=5 G=23 B=54', '#051736', 'tint', 'rgb', 0, 1], ['R=10 G=43 B=97', '#0a2b61', 'tint', 'rgb'], ['R=57 G=83 B=130', '#395382', 'tint', 'rgb'], ['R=100 G=141 B=172', '#648dac', 'tint', 'rgb'], ['R=167 G=188 B=214', '#a7bcd6', 'tint', 'rgb'], ['R=250 G=244 B=241', '#faf4f1', 'tint', 'rgb'], ['R=104 G=124 B=123', '#687c7b', 'tint', 'rgb'], ['R=163 G=178 B=164', '#a3b2a4', 'tint', 'rgb']
];
const icon = id => !id ? '' : id === 'reg'
  ? '<svg width="14" height="14" viewBox="0 0 14 14"><path d="M.500.500h13v13H.500zM7 1v12M1 7h12" fill="none" stroke="#bdbdbd"/><circle cx="7" cy="7" r="3.500" fill="none" stroke="#bdbdbd"/></svg>'
  : `<svg width="14" height="14"><use href="#${id}"/></svg>`;
document.getElementById('swatches').innerHTML = rows.map(([name, col, kind = 'tint', mode = 'cmyk', lock, sel], i) => {
  if (!col) return `<tr class="grp"><td colspan="4"><div><svg width="11" height="11"><use href="#down"/></svg><svg width="19" height="16"><use href="#folder"/></svg>${name}</div></td></tr>`;
  const chip = col === 'none' ? '<svg class="sw"><use href="#none"/></svg>' : `<i class="sw" style="background:${col}"></i>`;
  return `<tr class="${i < 4 ? 'top' : ''}${sel ? ' sel' : ''}"><td><div>${chip}${name}</div></td><td class="ic lock">${lock ? '<svg width="15" height="15"><use href="#nopen"/></svg>' : ''}</td><td class="ic">${icon(kind)}</td><td class="ic">${icon(mode)}</td></tr>`;
}).join('');
```
FILE: styles.css
```css
* { box-sizing: border-box; }
html, body { height: 100%; margin: 0; }
body { background: #535353; color: #e6e6e6; font: 13px/18px "Noto Sans", sans-serif; overflow: hidden; }
button, input, select { font: inherit; color: inherit; background: none; border: 0; padding: 0; margin: 0; border-radius: 0; outline: 0; }
button { display: flex; align-items: center; justify-content: center; }
svg { display: block; flex: none; }
i { font-style: normal; }
h1, h2, h3, p { margin: 0; font-weight: 400; }
.defs { position: absolute; width: 0; height: 0; }

.app { display: grid; height: 100vh; grid-template-columns: 53px 1fr 334px 209px; grid-template-rows: 42px 76px 1fr 20px; }

/* title bar */
.title-bar { display: flex; grid-column: 1 / 3; height: 42px; border-bottom: 1px solid #3d3d3d; padding-left: 9px; background: #535353; }
.light { width: 16px; height: 16px; margin: 8px 10px 0 0; border-radius: 50%; }
.red { background: #ff5f57; }
.amber { background: #febc2e; }
.green { background: #28c840; }
.home { align-self: flex-start; margin: 8px 0 0 13px; }
h1 { flex: 1; font-size: 16px; line-height: 29px; text-align: center; padding-left: 26px; }
.sep { width: 1px; height: 60px; background: #494949; flex: none; }
.sep.tall { height: 26px; margin-top: 3px; }
.mid-title { height: 39px; padding-left: 95px; }
.share { position: relative; width: 68px; height: 30px; border-radius: 15px; background: #1473e6; color: #fff; font-size: 15px; font-weight: 600; }
.share .dot { position: absolute; left: -4px; top: -5px; width: 14px; height: 14px; border-radius: 50%; background: #1473e6; border: 1px solid #4474b0; }
.bulb { height: 30px; margin: 0 19px; }
.workspace { height: 30px; margin-left: 17px; font-size: 16px; font-weight: 600; gap: 15px; }
.dock-title { padding-left: 20px; }
.search { display: flex; align-items: center; width: 167px; height: 25px; margin: 5px 0 0 8px; padding-left: 4px; gap: 6px; background: #454545; border: 1px solid #707070; border-radius: 2px; }
.search input { flex: 1; min-width: 0; font-size: 14px; }
.search input::placeholder { color: #8a8a8a; opacity: 1; }

/* control bar */
.control-bar { display: flex; align-items: center; grid-column: 1 / 3; height: 76px; padding-bottom: 1px; border-bottom: 1px solid #3d3d3d; background: #535353; }
.vgrip { width: 3px; height: 26px; margin-left: 6px; background: repeating-linear-gradient(#3f3f3f 0 1px, transparent 1px 3px); }
.refpoint { margin-left: 25px; }
.pair { display: grid; gap: 6px; grid-template-rows: 27px 27px; }
.row { display: flex; align-items: center; }
.row label { width: 16px; font-size: 14px; font-weight: 500; white-space: nowrap; }
.gap6 { gap: 6px; }
.g6 { margin-left: 6px; } .g8 { margin-left: 8px; } .g9 { margin-left: 9px; } .g10 { margin-left: 10px; }
.g12 { margin-left: 12px; } .g14 { margin-left: 14px; } .g17 { margin-left: 17px; }
.field { display: flex; align-items: stretch; width: 111px; height: 27px; background: #5e5e5e; border-radius: 3px; overflow: hidden; }
.field input { flex: 1; min-width: 0; padding-left: 6px; font-size: 13px; }
.field button { width: 23px; flex: none; color: #d0d0d0; }
.dim { background: #595959; color: #8d8d8d; }
.dim > svg { background: #5e5e5e; }
.dark { background: #454545; border: 1px solid #6c6c6c; }
.dark > svg { margin-top: -1px; }
.dark button, .dd { border-left: 1px solid #6c6c6c; }
.dark input { color: #eee; }
.dark > svg + input { border-left: 1px solid #6c6c6c; }
.chain { width: 28px; height: 28px; background: #303030; border-radius: 3px; }
.icons4 { display: grid; grid-template-columns: auto auto; gap: 9px 10px; justify-items: center; align-items: center; }
.trees { column-gap: 11px; color: #c0c0c0; }
.faint { color: #858585; }
.serif-p { font: 28px "Liberation Serif", serif; fill: #8d8d8d; text-anchor: middle; }
.serif-t { font: bold 16px "Liberation Serif", serif; fill: #bdbdbd; }
.serif-t.big { font-size: 18px; }
.chip { width: 18px; height: 18px; }
.navy { background: #051736; }
.box-btn { width: 24px; height: 26px; background: #454545; border: 1px solid #6c6c6c; border-radius: 3px; color: #d0d0d0; }
.preview { flex: 1; background: #e2e2e2; padding: 8px 10px 8px 5px; }
.preview .line { display: block; height: 9px; background: #000; }
.corner i { display: block; height: 21px; border: 2px solid #222; border-width: 2px 2px 0 0; }
.preview.corner { padding: 3px 9px 0 3px; }
.obj { justify-content: space-between; padding: 0 14px 0 3px; width: 114px; }
.fx { font: italic 18px "Liberation Serif", serif; fill: #c4c4c4; }
.fx.lg { font-size: 20px; fill: #bdbdbd; }
.opac { padding-left: 2px; }
.opacity { width: 90px; }
.wraps { gap: 7px; }
.wraps button { width: 28px; height: 27px; border-radius: 3px; }
.on { background: #303030; }
.spacer25 { width: 25px; }
.style { width: 233px; }
.style select { flex: 1; appearance: none; background: #e2e2e2; color: #1c1c1c; padding-left: 9px; font-size: 13px; font-weight: 500; }
.dd { display: flex; width: 23px; align-items: center; justify-content: center; }
.tail { justify-content: flex-end; gap: 14px; padding-right: 4px; }
.dock-control { justify-content: flex-end; gap: 13px; padding-right: 4px; }
.stack { display: grid; gap: 20px; justify-items: center; }

/* tools */
.toolbar { grid-column: 1; grid-row: 3 / 5; background: #535353; border-right: 3px solid #414141; }
.tool-head { height: 15px; padding: 4px 0 0 6px; background: #424242; border-bottom: 1px solid #383838; }
.grip { display: block; width: 25px; height: 5px; margin: 0 auto; background: repeating-linear-gradient(90deg, #3b3b3b 0 1px, #535353 1px 3px); }
.toolbar > .grip { margin: 5px auto 9px 12px; }
.tools { border-bottom: 1px solid #484848; padding-bottom: 1px; }
.tools button { width: 36px; height: 31px; margin-left: 6px; border-radius: 3px; }
.tools svg { width: 36px; height: 30px; }
.more { background: linear-gradient(135deg, transparent 50%, #c8c8c8 50%) no-repeat right 26px / 5px 5px; background-position: right 0 bottom 3px; }
.colour-tools { padding: 5px 6px 0; }
.cline { display: flex; justify-content: space-between; align-items: center; width: 37px; }
.fs { margin-top: 7px; }
.fmt { margin-top: 7px; }
.fmt-on, .pfmt { display: flex; align-items: center; justify-content: center; width: 18px; height: 18px; background: #353535; border-radius: 2px; }
.fmt-on i, .pfmt i { width: 11px; height: 10px; background: #757575; border: 1px solid #bdbdbd; }
.mode { width: 37px; height: 29px; border-radius: 3px; margin-top: 8px; }
.navybox { width: 20px; height: 18px; background: #051736; border: 1px solid #a0a0a0; }

/* document area */
.document { grid-column: 2; grid-row: 3; display: flex; flex-direction: column; min-width: 0; min-height: 0; padding-left: 1px; background: #414141; }
.tabs { height: 37px; background: #424242; border-bottom: 1px solid #383838; }
.tab { height: 36px; padding: 0 18px; gap: 11px; background: #535353; color: #f0f0f0; font-size: 14px; font-weight: 600; line-height: 34px; white-space: nowrap; }
.ruler-row { display: flex; height: 21px; background: #1f1f1f; border-bottom: 1px solid #858585; flex: none; }
.hruler { flex: 1; width: 0; height: 20px; min-width: 0; }
.ruler-row .corner { border-right: 1px solid #777; }
.hruler text, .vruler text { font: 600 13px "Noto Sans", sans-serif; fill: #eee; }
.canvas-row { display: flex; flex: 1; min-height: 0; }
.vruler { height: 100%; background: #1f1f1f; border-right: 1px solid #777; }
.canvas { position: relative; flex: 1; background: #5d5d5d; overflow: hidden; min-width: 0; }

/* the spread and its frames */
.spread { position: absolute; left: 33px; top: 14px; width: 1694px; height: 1105px; background: #faf4f1; color: #2d3a57; }
.art { position: absolute; left: 0; top: 0; width: 1694px; height: 1105px; pointer-events: none; }
.frame { position: absolute; white-space: nowrap; }
h2 { font: 300 30px/36px Roboto, sans-serif; color: #39538a; }
h3 { font: 17px/20px "Liberation Sans", sans-serif; color: #39538a; }
.body { font: 12px/19px "Liberation Sans", sans-serif; top: 133px; }
.body b { color: #15224a; }
.body i { font-style: italic; }
.body p + p { margin-top: 20px; }
.info { font: 10px/16px Inter, sans-serif; color: #405a90; }
.folio { font: 10px/16px Inter, sans-serif; color: #0a1630; top: 1043px; }
.h-left, .h-right { top: 78px; }
.h-left, .b1, .c-left, .i-left, .f-left { left: 86px; }
.b2 { left: 441px; }
.h-right, .b3, .i-right { left: 920px; }
.c-left { top: 592px; }
.c-right { left: 1290px; top: 130px; }
.i-left { top: 956px; }
.i-right { top: 972px; }
.f-right { right: 86px; }
.chart text { font: 10px Inter, sans-serif; }
.chart .axis { fill: #3f5a8f; }
.chart .val { fill: #0f1d3d; font-weight: 500; }
.mid-t { text-anchor: middle; }
.grid-l { stroke: #c3d0e8; stroke-width: 2; }
.grid-r { stroke: #a9bfdf; stroke-width: 2; }
.halo { fill: #faf4f1; }
.eq { fill: #a3b2a4; }
.lp { fill: #687c7a; }
.trend { fill: none; stroke: #687c7a; stroke-width: 3; stroke-linejoin: round; }
.chart .pt { fill: #687c7a; }

/* area under the floating panel */
.mid { position: relative; grid-column: 3; grid-row: 1 / 4; display: flex; flex-direction: column; min-height: 0; }
.mid-row { display: flex; flex: 1; min-height: 0; }
.mid-doc { flex: 1; min-width: 0; display: flex; flex-direction: column; }
.vtrack { width: 20px; flex: none; background: #4a4a4a; }
.ruler-row .vtrack { height: 21px; }
.mini { width: 52px; flex: none; background: #535353; border: solid #3d3d3d; border-width: 0 1px 0 3px; }
.dock-head { display: flex; justify-content: flex-end; align-items: center; height: 15px; flex: none; padding-right: 8px; background: #424242; border-bottom: 1px solid #383838; }
.mini-body { height: 54px; padding-top: 5px; border-bottom: 2px solid #404040; }
.mini-body button { margin: 9px auto 0; }

/* swatches panel */
.panel { position: absolute; left: 21px; right: 0; top: 190px; bottom: 3px; display: flex; flex-direction: column; background: #535353; border-top: 5px solid #353535; border-left: 2px solid #404040; box-shadow: -2px 0 5px rgba(0, 0, 0, .25); }
.ptabs { display: flex; height: 35px; background: #424242; }
.ptabs button { border: solid #383838; border-width: 0 1px 1px 0; font-size: 14px; font-weight: 600; color: #a5a5a5; overflow: hidden; }
.ptabs .p1 { width: 64px; padding-left: 11px; }
.ptabs .p2 { width: 104px; padding-right: 5px; background: #535353; color: #fff; gap: 5px; border-bottom-color: #535353; }
.ptabs .p3 { width: 65px; padding-right: 2px; justify-content: flex-end; }
.ptail { display: flex; flex: 1; align-items: center; justify-content: flex-end; gap: 9px; padding-right: 5px; border-bottom: 1px solid #383838; }
.ptail i { width: 1px; height: 14px; background: #888; }
.ptools { display: flex; align-items: center; height: 51px; padding: 0 0 0 7px; border-bottom: 1px solid #4a4a4a; }
.pfmt { width: 24px; height: 25px; margin-left: 12px; }
.pt { margin-left: 8px; }
.ptools label { margin-left: 51px; font-weight: 500; }
.tintf { width: 68px; margin: 0 4px 0 7px; }
.plist { display: flex; flex: 1; min-height: 0; overflow: hidden; }
table { flex: 1; border-collapse: collapse; align-self: flex-start; font: 13px/18px "DejaVu Sans", sans-serif; }
td { height: 28px; padding: 0; border-bottom: 1px solid #5b5b5b; }
.grp td { height: 30px; }
td div { display: flex; align-items: center; padding-left: 42px; gap: 9px; white-space: nowrap; }
.top td div { padding-left: 22px; }
.grp td div { padding-left: 2px; gap: 5px; color: #eee; }
.sw { width: 17px; height: 17px; border: 1px solid #333; }
.ic { width: 21px; }
.lock { width: 21px; }
td:last-child:not(:first-child) { width: 32px; }
.sel { background: #486b87; font-weight: 700; color: #fff; }
.sel td { font-size: 12px; }
.pscroll { width: 16px; background: #474747; }
.pscroll i { display: block; width: 12px; height: 93%; margin: 0 auto; border-radius: 6px; background: #696969; }

/* panel dock */
.dock { grid-column: 4; grid-row: 1 / 5; display: flex; flex-direction: column; background: #535353; }
.dock-title, .dock-control { flex: none; }
.dock-body { border-left: 3px solid #414141; flex: 1; }
.group { padding: 5px 2px 0 6px; border-bottom: 2px solid #424242; }
.group .grip { margin-bottom: 4px; }
.group:nth-child(even) .grip { margin-bottom: 5px; }
.group:first-child .grip { margin-bottom: 3px; }
.group:nth-child(2) .grip { margin-bottom: 4px; }
.group button { width: 100%; height: 36px; justify-content: flex-start; padding-left: 7px; gap: 12px; font-size: 15px; font-weight: 600; color: #ececec; border: 3px solid #535353; border-width: 3px 0; background-clip: padding-box; white-space: nowrap; }
.group svg { width: 22px; height: 22px; overflow: visible; }
.group .on { background-color: #373737; border-radius: 3px; }
.group .pantone { padding-left: 2px; gap: 8px; }
.pantone svg { width: 31px; height: 31px; }
.ic-a { font: 500 20px "Noto Sans", sans-serif; fill: #bdbdbd; }
.ic-b { font: 16px "Noto Sans", sans-serif; fill: #bdbdbd; }
.ic-g { font: italic 20px "Liberation Serif", serif; fill: #bdbdbd; }

/* status bar */
.status { grid-column: 2 / 4; grid-row: 4; display: flex; background: #4a4a4a; border-left: 1px solid #414141; }
.st-left { display: flex; align-items: center; width: 658px; padding-left: 18px; background: #535353; font-weight: 500; }
.zoomv { gap: 16px; margin-right: 16px; }
.pagef { width: 115px; height: 20px; }
.st-doc { margin: 0 23px 0 17px; }
.profile { gap: 29px; }
.errors { margin-left: 20px; gap: 7px; }
.errors i { width: 13px; height: 13px; border-radius: 50%; background: #f93e3c; }
.errors svg { margin-left: 30px; }
.hscroll { flex: 1; }
.hscroll i { display: block; width: 59%; height: 19px; margin: 1px 0 0 318px; border-radius: 9px; background: #696969; }
.st-end { display: flex; align-items: center; gap: 8px; width: 49px; padding-left: 5px; background: #535353; }
.st-mini { width: 51px; background: #535353; border-left: 2px solid #404040; }
```
